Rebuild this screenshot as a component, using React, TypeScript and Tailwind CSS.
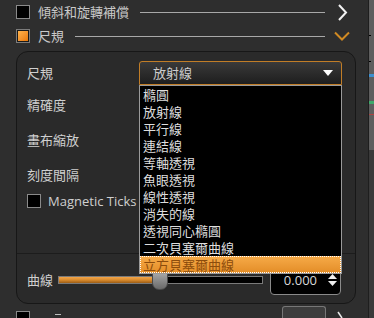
const shapes = [
  '橢圓',
  '放射線',
  '平行線',
  '連結線',
  '等軸透視',
  '魚眼透視',
  '線性透視',
  '消失的線',
  '透視同心橢圓',
  '二次貝塞爾曲線',
  '立方貝塞爾曲線',
];

function SectionRow({ title, open }: { title: string; open?: boolean }) {
  return (
    <div className="flex items-center h-[25px]">
      {open ? (
        <div className="w-[14px] h-[14px] border border-[#7c7c7c] p-px bg-[#1a1a1a]">
          <div className="w-full h-full bg-gradient-to-br from-[#ffb34a] to-[#e87800]" />
        </div>
      ) : (
        <div className="w-[14px] h-[14px] border border-[#8a8a8a] bg-black" />
      )}
      <span className="ml-2 text-[13px] leading-[16px] text-[#c9c9c9]">{title}</span>
      <div className="flex-1 ml-[11px] h-px bg-[#a8a8a8]" />
      <div className="w-[31px] flex justify-center pl-[3px]">
        {open ? (
          <svg width="16" height="11" viewBox="0 0 16 11">
            <path d="M1 1.5 L8 8.5 L15 1.5" fill="none" stroke="#d18a22" strokeWidth="2" />
          </svg>
        ) : (
          <svg width="11" height="17" viewBox="0 0 11 17">
            <path d="M2 1 L9 8.5 L2 16" fill="none" stroke="#f2f2f2" strokeWidth="2" />
          </svg>
        )}
      </div>
    </div>
  );
}

export default function App() {
  return (
    <div className="w-[374px] h-[318px] overflow-hidden flex bg-[#2e2e2e] font-['Noto_Sans_CJK_TC',sans-serif]">
      {/* Main column */}
      <div className="flex-1 flex flex-col pl-4 pr-[12px] border-r border-[#1e1e1e]">
        <SectionRow title="傾斜和旋轉補償" />
        <SectionRow title="尺規" open />

        {/* Ruler panel */}
        <div className="mt-[3px] h-[253px] shrink-0 rounded-[12px] border border-[#171717] bg-[#2a2a2a] pt-[9px] flex flex-col">
          <div className="flex items-center h-[24px] pl-[10px]">
            <span className="w-[112px] text-[13px] leading-[16px] text-[#cfcfcf]">尺規</span>
            <div className="relative w-[203px] z-10">
              <div className="h-[24px] flex items-center justify-between pl-[13px] pr-[8px] rounded-t-[3px] border border-[#c17d27] bg-gradient-to-b from-[#3a3a3a] to-[#1e1e1e]">
                <span className="text-[13px] leading-[16px] text-[#cdcdcd]">放射線</span>
                <svg width="10" height="6" viewBox="0 0 10 6">
                  <path d="M0 0 H10 L5 6 Z" fill="#ffffff" />
                </svg>
              </div>
              {/* Open list */}
              <div className="absolute left-0 top-full w-full border border-[#9a9a9a] bg-black">
                {shapes.map((s, i) =>
                  i === shapes.length - 1 ? (
                    <div
                      key={s}
                      className="h-[17px] pl-[3px] text-[13px] leading-[17px] text-[#8c4c0c] bg-gradient-to-b from-[#f7ab48] to-[#e38d26] outline outline-1 outline-dotted outline-white -outline-offset-1"
                    >
                      {s}
                    </div>
                  ) : (
                    <div key={s} className="h-[17px] pl-[3px] text-[13px] leading-[17px] text-[#dedede]">
                      {s}
                    </div>
                  )
                )}
              </div>
            </div>
          </div>

          <div className="mt-[10px] h-[20px] flex items-center pl-[10px] text-[13px] leading-[16px] text-[#cfcfcf]">精確度</div>
          <div className="mt-[15px] h-[20px] flex items-center pl-[10px] text-[13px] leading-[16px] text-[#cfcfcf]">畫布縮放</div>
          <div className="mt-[15px] h-[20px] flex items-center pl-[10px] text-[13px] leading-[16px] text-[#cfcfcf]">刻度間隔</div>

          <div className="mt-[6px] h-[20px] flex items-center pl-[10px]">
            <div className="w-[14px] h-[14px] border border-[#8a8a8a] bg-black" />
            <span className="ml-[7px] text-[13px] leading-[16px] text-[#cfcfcf] font-['Open_Sans',sans-serif]">Magnetic Ticks</span>
          </div>

          <div className="mt-[42px] h-px bg-[#1c1c1c]" />

          <div className="mt-[11px] h-[30px] flex items-center pl-[10px]">
            <span className="w-[31px] text-[13px] leading-[16px] text-[#cfcfcf]">曲線</span>
            <div className="relative w-[205px] h-[8px] border border-[#7a7a7a] bg-black">
              <div className="h-full w-[96px] bg-gradient-to-b from-[#f2a64a] via-[#d98a2c] to-[#9c5d16]" />
              <div className="absolute left-[93px] top-[-8px] w-[16px] h-[21px] rounded-b-[7px] rounded-t-[2px] border border-[#4a4a4a] bg-gradient-to-b from-[#b4b4b4] to-[#6a6a6a]" />
            </div>
            <div className="ml-[7px] w-[71px] h-[30px] flex items-center justify-end pr-[3px] border border-[#8a8a8a] rounded-b-[4px] bg-black">
              <span className="text-[13px] leading-[16px] text-[#d8d8d8] font-['Open_Sans',sans-serif]">0.000</span>
              <div className="ml-[11px] flex flex-col gap-[2px]">
                <svg width="9" height="5" viewBox="0 0 9 5">
                  <path d="M0 5 L4.5 0 L9 5 Z" fill="#f0f0f0" />
                </svg>
                <svg width="9" height="5" viewBox="0 0 9 5">
                  <path d="M0 0 H9 L4.5 5 Z" fill="#f0f0f0" />
                </svg>
              </div>
            </div>
          </div>
        </div>

        {/* Next section, cut off */}
        <div className="mt-[1px] h-[13px] flex items-end relative">
          <div className="w-[14px] h-[7px] border-t border-x border-[#8a8a8a] bg-black" />
          <div className="ml-[25px] mb-[3px] w-[6px] h-px bg-[#bdbdbd]" />
          <div className="ml-auto mr-[30px] w-[44px] h-[12px] rounded-t-[3px] border-t border-x border-[#777] bg-[#3d3d3d]" />
          <svg className="absolute right-[13px] bottom-0" width="6" height="7" viewBox="0 0 6 7">
            <path d="M1 1 L5 7" fill="none" stroke="#e8e8e8" strokeWidth="1.5" />
          </svg>
        </div>
      </div>

      {/* Side strip */}
      <div className="w-[5px] flex flex-col">
        <div className="h-[150px] bg-[#5e5e5e] relative">
          <div className="absolute left-0 top-[35px] w-[2px] h-px bg-black" />
          <div className="absolute left-0 top-[61px] w-[2px] h-px bg-black" />
          <div className="absolute left-0 top-[74px] w-full h-[3px] bg-[#3d8fd0]" />
          <div className="absolute left-0 top-[101px] w-full h-[3px] bg-[#3ea86a]" />
          <div className="absolute left-0 top-[114px] w-full h-px bg-[#b04040]" />
        </div>
        <div className="flex-1 bg-[#3a3a3a]" />
      </div>
    </div>
  );
}
